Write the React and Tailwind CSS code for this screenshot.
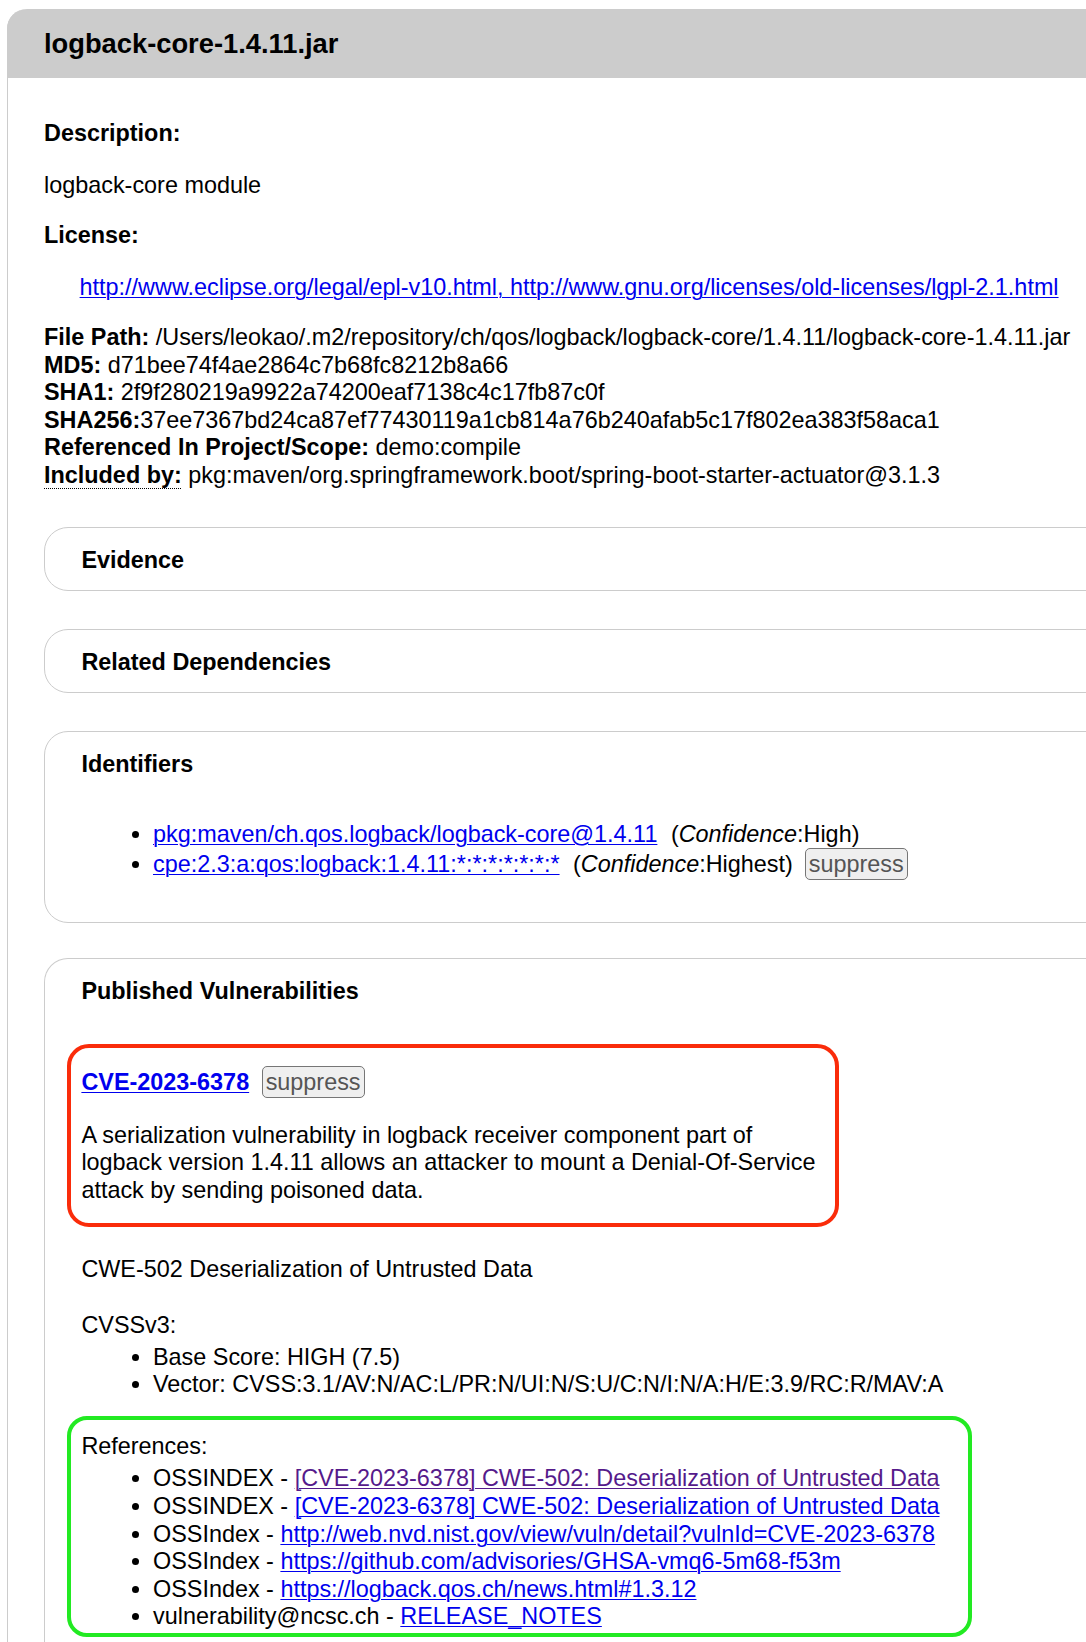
export default function App() {
  const link = "text-[#0000ee] underline underline-offset-[2px] decoration-1";
  const btn =
    "inline-block align-baseline border border-[#767676] rounded-[5px] bg-[#efefef] text-[#555555] px-[3px] py-px leading-[28px]";
  return (
    <div className="w-[1086px] h-[1642px] overflow-hidden bg-white pt-[9px] pl-[7px] font-['Liberation_Sans',Arial,Helvetica,sans-serif] text-[23.4px] leading-[27.6px] text-black">
      <div className="w-[1260px] min-h-[1700px] border-l border-[#cccccc] rounded-tl-[20px]">
        <div className="-ml-px h-[69px] bg-[#cccccc] rounded-tl-[20px] flex items-center pl-[37px]">
          <h3 className="text-[27.3px] font-bold leading-[31px]">logback-core-1.4.11.jar</h3>
        </div>
        <div className="pl-[36px]">
          <p className="mt-[41.5px] font-bold">Description:</p>
          <p className="mt-[25.3px]">logback-core module</p>
          <p className="mt-[22.3px] font-bold">License:</p>
          <p className="mt-[24.3px] pl-[35.6px]">
            <a className={link}>
              http://www.eclipse.org/legal/epl-v10.html, http://www.gnu.org/licenses/old-licenses/lgpl-2.1.html
            </a>
          </p>
          <div className="mt-[22.3px]">
            <div>
              <b>File Path:</b> /Users/leokao/.m2/repository/ch/qos/logback/logback-core/1.4.11/logback-core-1.4.11.jar
            </div>
            <div>
              <b>MD5:</b> d71bee74f4ae2864c7b68fc8212b8a66
            </div>
            <div>
              <b>SHA1:</b> 2f9f280219a9922a74200eaf7138c4c17fb87c0f
            </div>
            <div>
              <b>SHA256:</b>37ee7367bd24ca87ef77430119a1cb814a76b240afab5c17f802ea383f58aca1
            </div>
            <div>
              <b>Referenced In Project/Scope:</b> demo:compile
            </div>
            <div>
              <b className="underline decoration-dotted decoration-1 underline-offset-[5px]">Included by:</b>{" "}
              pkg:maven/org.springframework.boot/spring-boot-starter-actuator@3.1.3
            </div>
          </div>

          <div className="mt-[37px] border border-[#cccccc] rounded-l-[24px] pl-[36.4px] pt-[19.5px] pb-[15.5px]">
            <h4 className="font-bold">Evidence</h4>
          </div>

          <div className="mt-[37.5px] border border-[#cccccc] rounded-l-[24px] pl-[36.4px] pt-[19.5px] pb-[15.5px]">
            <h4 className="font-bold">Related Dependencies</h4>
          </div>

          <div className="mt-[37.5px] border border-[#cccccc] rounded-l-[24px] pl-[36.4px] pt-[18.8px] pb-[19.8px]">
            <h4 className="font-bold">Identifiers</h4>
            <ul className="mt-[42.4px] mb-[21.7px] list-disc pl-[71.6px]">
              <li>
                <a className={link}>pkg:maven/ch.qos.logback/logback-core@1.4.11</a>
                <span className="ml-[13.5px]">
                  (<i>Confidence</i>:High)
                </span>
              </li>
              <li>
                <a className={link}>cpe:2.3:a:qos:logback:1.4.11:*:*:*:*:*:*:*</a>
                <span className="ml-[13.5px]">
                  (<i>Confidence</i>:Highest)
                </span>
                <span className={btn + " ml-[12px]"}>suppress</span>
              </li>
            </ul>
          </div>

          <div className="mt-[35px] border border-b-0 border-[#cccccc] rounded-tl-[24px] pl-[36.4px] pt-[19.2px] min-h-[800px]">
            <h4 className="font-bold">Published Vulnerabilities</h4>

            <div className="mt-[38.2px] -ml-[14.6px] w-[772px] border-[4px] border-[#fa2c0a] rounded-[22px] pl-[10.6px] pr-[10px] pt-[18.7px] pb-[18.5px]">
              <div className="flex items-center h-[32px]">
                <a className={link + " font-bold"}>CVE-2023-6378</a>
                <span className={btn + " ml-[12.5px]"}>suppress</span>
              </div>
              <p className="mt-[23.5px]">
                A serialization vulnerability in logback receiver component part of logback version 1.4.11 allows an
                attacker to mount a Denial-Of-Service attack by sending poisoned data.
              </p>
            </div>

            <p className="mt-[28.5px]">CWE-502 Deserialization of Untrusted Data</p>
            <p className="mt-[28.4px]">CVSSv3:</p>
            <ul className="mt-[4.6px] list-disc pl-[71.6px]">
              <li>Base Score: HIGH (7.5)</li>
              <li>Vector: CVSS:3.1/AV:N/AC:L/PR:N/UI:N/S:U/C:N/I:N/A:H/E:3.9/RC:R/MAV:A</li>
            </ul>

            <div className="mt-[17px] -ml-[14.6px] w-[905px] border-[4px] border-[#22ea22] rounded-[20px] pl-[10.6px] pt-[13.2px] pb-[2px]">
              <p>References:</p>
              <ul className="mt-[4.7px] list-disc pl-[71.6px]">
                <li>
                  OSSINDEX -{" "}
                  <a className="text-[#551a8b] underline underline-offset-[2px] decoration-1">
                    [CVE-2023-6378] CWE-502: Deserialization of Untrusted Data
                  </a>
                </li>
                <li>
                  OSSINDEX - <a className={link}>[CVE-2023-6378] CWE-502: Deserialization of Untrusted Data</a>
                </li>
                <li>
                  OSSIndex - <a className={link}>http://web.nvd.nist.gov/view/vuln/detail?vulnId=CVE-2023-6378</a>
                </li>
                <li>
                  OSSIndex - <a className={link}>https://github.com/advisories/GHSA-vmq6-5m68-f53m</a>
                </li>
                <li>
                  OSSIndex - <a className={link}>https://logback.qos.ch/news.html#1.3.12</a>
                </li>
                <li>
                  vulnerability@ncsc.ch - <a className={link}>RELEASE_NOTES</a>
                </li>
              </ul>
            </div>
          </div>
        </div>
      </div>
    </div>
  );
}
